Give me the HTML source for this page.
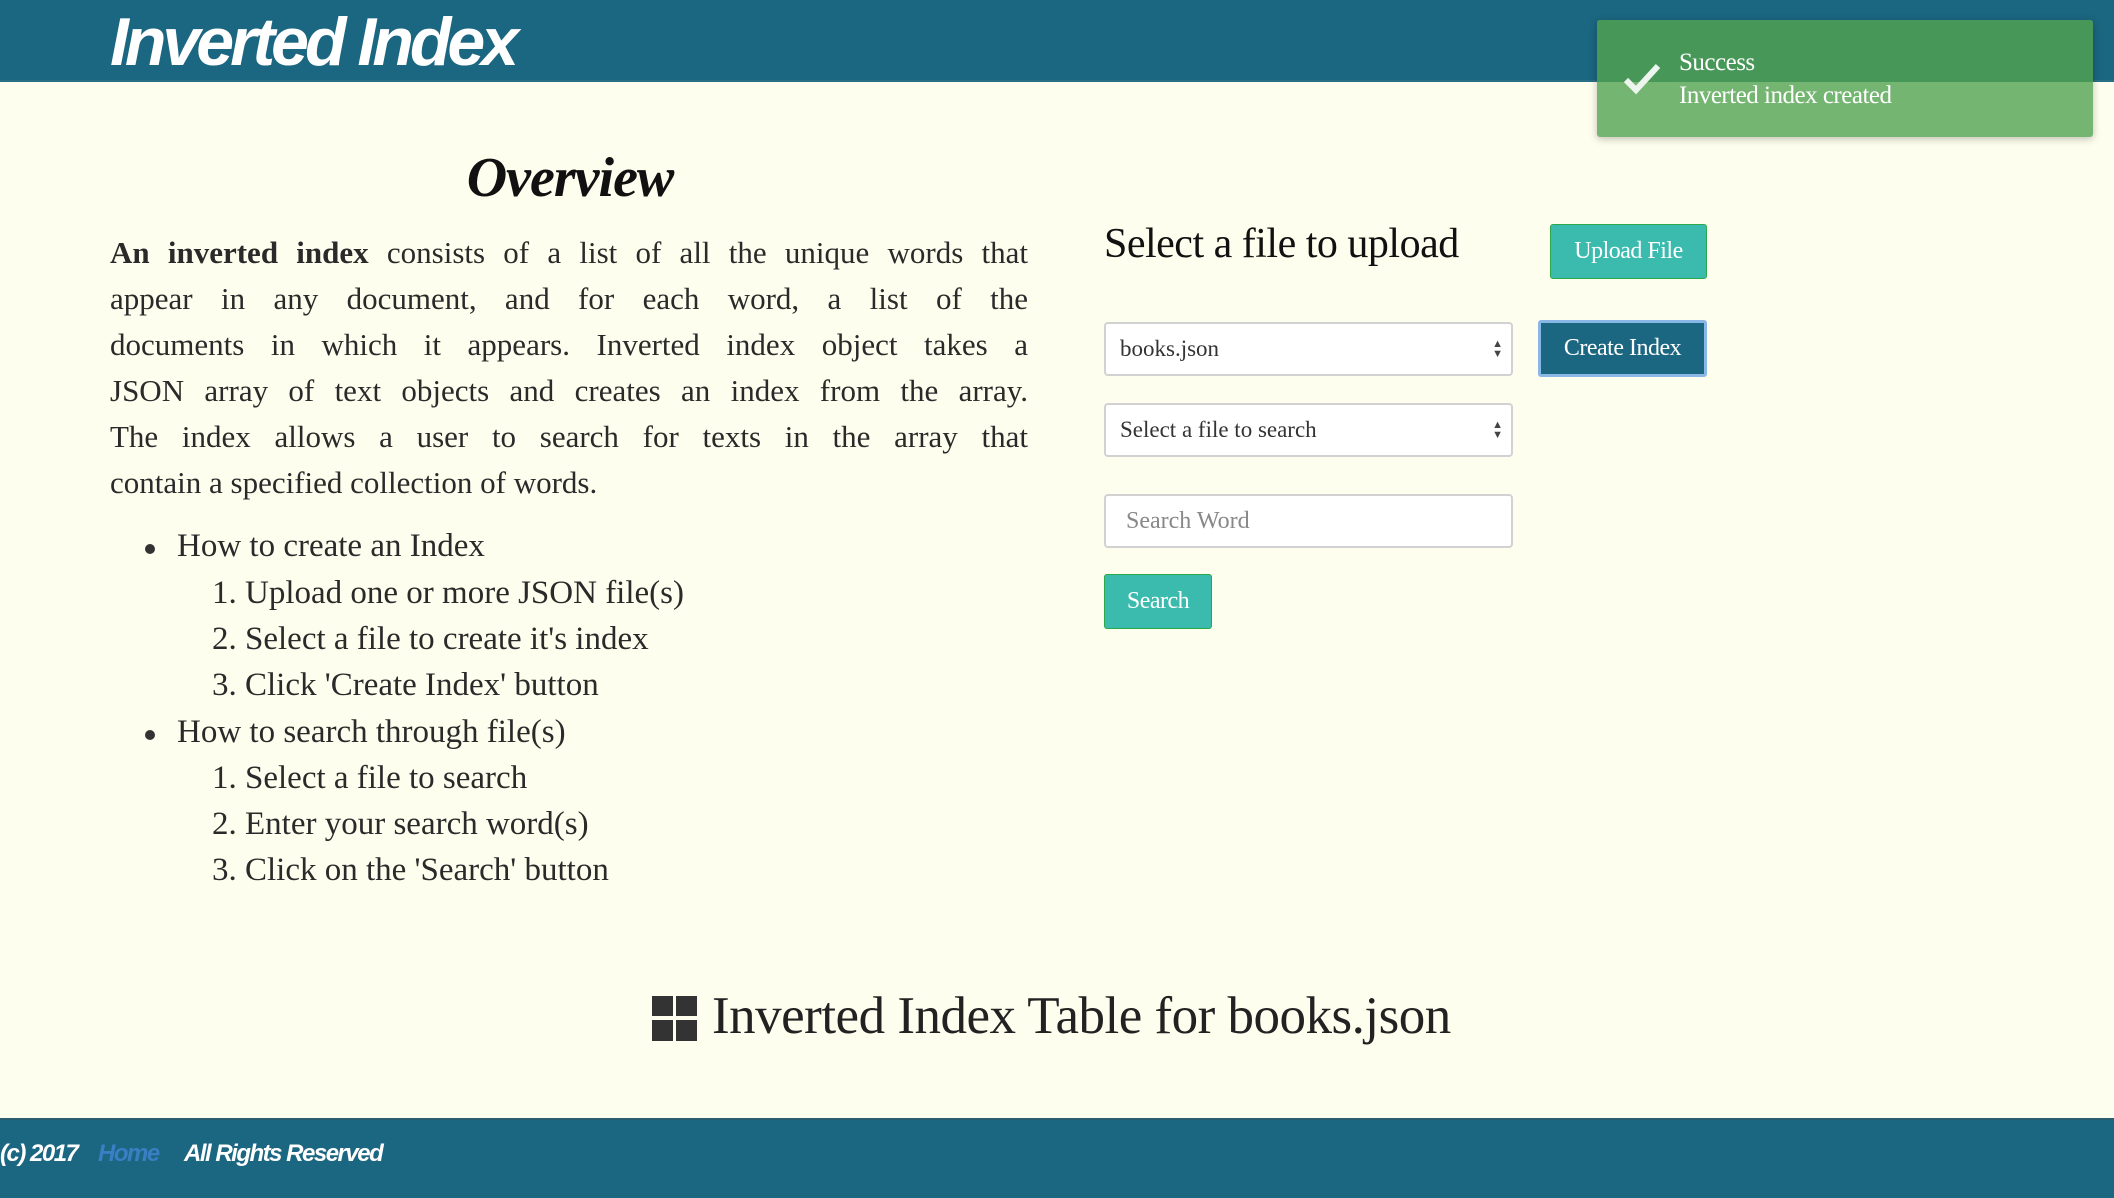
<!DOCTYPE html>
<html><head><meta charset="utf-8"><style>
*{margin:0;padding:0;box-sizing:border-box}
body{width:2114px;height:1198px;background:#fefeee;position:relative;overflow:hidden;font-family:"Liberation Serif",serif;color:#222}
.abs{position:absolute}
#hdr{left:0;top:0;width:2114px;height:82px;background:#1b6680;border-bottom:2px solid #2a6f86}
#title{left:110px;top:2px;font:italic bold 68px "Liberation Sans",sans-serif;color:#fff;letter-spacing:-4px;line-height:80px}
#toast{left:1597px;top:20px;width:496px;height:117px;background:#75b572;box-shadow:0 2px 8px rgba(0,0,0,.25);border-radius:3px;overflow:hidden}
#toast .top{position:absolute;left:0;top:0;width:100%;height:62px;background:#479858}
#toast .t{position:absolute;left:82px;color:#fff;font-size:25px;letter-spacing:-.5px}
h2{left:0;width:1140px;text-align:center;top:146px;font:italic bold 56px "Liberation Serif",serif;color:#111;letter-spacing:-1px}
.p{left:110px;width:918px;font-size:31px;line-height:46px;color:#2a2a2a}
.p div{text-align:justify;text-align-last:justify;height:46px;white-space:nowrap}
.p div.l{text-align-last:left}
.li{font-size:33px;line-height:46px;color:#2a2a2a;white-space:nowrap}
.dot{width:10px;height:10px;border-radius:50%;background:#333}
.btn{color:#fff;font-size:24px;text-align:center;border-radius:3px;letter-spacing:-.5px}
.sel{left:1104px;width:409px;height:54px;background:#fff;border:2px solid #d2d2d2;border-radius:4px;font-size:23px;padding-left:14px;line-height:50px;color:#333}
.arr{position:absolute;right:8px;top:15px;font-size:11px;line-height:10px;color:#444}
#foot{left:0;top:1118px;width:2114px;height:80px;background:#1b6680;border-top:2px solid #2d5d70}
#foot span{position:absolute;top:20px;font:italic bold 24px "Liberation Sans",sans-serif;color:#fff;letter-spacing:-1.5px}
</style></head><body>
<div id="hdr" class="abs"></div>
<div id="title" class="abs">Inverted Index</div>
<div id="toast" class="abs"><div class="top"></div>
<svg class="abs" style="left:25px;top:42px" width="40" height="34" viewBox="0 0 40 34"><path d="M4 18 L14 28 L36 4" fill="none" stroke="#eef4ee" stroke-width="6"/></svg>
<div class="t" style="top:29px">Success</div><div class="t" style="top:62px">Inverted index created</div></div>
<h2 class="abs">Overview</h2>
<div class="p abs" style="top:230px">
<div><b>An inverted index</b> consists of a list of all the unique words that</div>
<div>appear in any document, and for each word, a list of the</div>
<div>documents in which it appears. Inverted index object takes a</div>
<div>JSON array of text objects and creates an index from the array.</div>
<div>The index allows a user to search for texts in the array that</div>
<div class="l">contain a specified collection of words.</div>
</div>
<div class="dot abs" style="left:145px;top:544px"></div>
<div class="li abs" style="left:177px;top:523px">How to create an Index</div>
<div class="li abs" style="left:212px;top:570px">1. Upload one or more JSON file(s)</div>
<div class="li abs" style="left:212px;top:616px">2. Select a file to create it's index</div>
<div class="li abs" style="left:212px;top:662px">3. Click 'Create Index' button</div>
<div class="dot abs" style="left:145px;top:730px"></div>
<div class="li abs" style="left:177px;top:709px">How to search through file(s)</div>
<div class="li abs" style="left:212px;top:755px">1. Select a file to search</div>
<div class="li abs" style="left:212px;top:801px">2. Enter your search word(s)</div>
<div class="li abs" style="left:212px;top:847px">3. Click on the 'Search' button</div>

<div class="abs" style="left:1104px;top:220px;font-size:42px;color:#111;letter-spacing:-.5px">Select a file to upload</div>
<div class="btn abs" style="left:1550px;top:224px;width:157px;height:55px;background:#3bbbae;border:1px solid #2aa84a;line-height:53px">Upload File</div>
<div class="sel abs" style="top:322px">books.json<div class="arr">▲<br>▼</div></div>
<div class="btn abs" style="left:1538px;top:320px;width:169px;height:57px;background:#1b6680;border:3px solid #8ab8e6;line-height:51px">Create Index</div>
<div class="sel abs" style="top:403px">Select a file to search<div class="arr">▲<br>▼</div></div>
<div class="sel abs" style="top:494px;color:#888;padding-left:20px;font-size:24px">Search Word</div>
<div class="btn abs" style="left:1104px;top:574px;width:108px;height:55px;background:#3bbbae;border:1px solid #2aa84a;line-height:53px">Search</div>

<svg class="abs" style="left:652px;top:996px" width="46" height="45" viewBox="0 0 46 45"><rect x="0" y="0" width="21" height="20" fill="#333"/><rect x="24" y="0" width="21" height="20" fill="#333"/><rect x="0" y="24" width="21" height="21" fill="#333"/><rect x="24" y="24" width="21" height="21" fill="#333"/></svg>
<div class="abs" style="left:712px;top:986px;font-size:53px;color:#222;letter-spacing:-.5px;white-space:nowrap">Inverted Index Table for books.json</div>
<div id="foot" class="abs"><span style="left:0">(c) 2017</span><span style="left:98px;color:#3a7fc4">Home</span><span style="left:184px">All Rights Reserved</span></div>
</body></html>
